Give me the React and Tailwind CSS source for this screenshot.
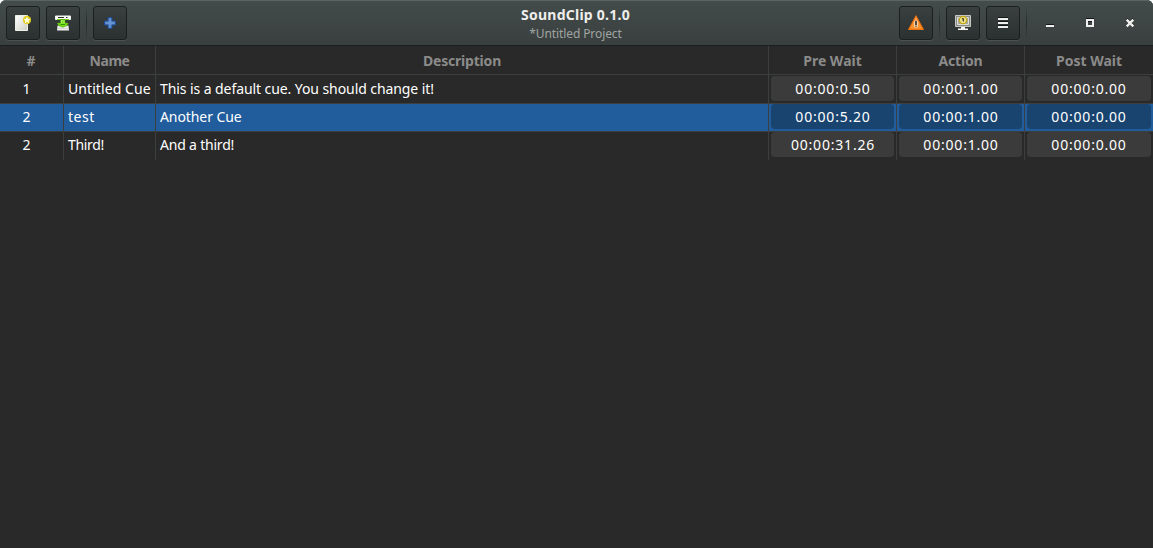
import React from "react";

function NewIcon() {
  return (
    <svg width="16" height="16" viewBox="0 0 16 16">
      <defs>
        <linearGradient id="page" x1="0" y1="0" x2="1" y2="1">
          <stop offset="0" stopColor="#ffffff" />
          <stop offset="1" stopColor="#cfcfc8" />
        </linearGradient>
      </defs>
      <path d="M0.5 0.5H12.5V15.5H0.5Z" fill="url(#page)" stroke="#f0f0ea" />
      <circle cx="12" cy="5" r="4.2" fill="#e4cd14" opacity="0.95" />
      <path d="M12 1.400l1 2.300 2.500.3-1.900 1.700.5 2.500L12 7 9.900 8.200l.5-2.500L8.500 4l2.500-.3z" fill="#fffde0" />
    </svg>
  );
}

function SaveIcon() {
  return (
    <svg width="16" height="16" viewBox="0 0 16 16">
      <path d="M0.500 1H15.500V4.500H0.500Z" fill="#fbfbf8" stroke="#f4f4ee" strokeWidth="1" />
      <path d="M3 2.500H9M11 2.500H12.500" stroke="#2b2f2d" />
      <path d="M2.500 10.500H13.500L14 15.500H2Z" fill="#eeeeec" />
      <path d="M3 13.500H13" stroke="#d4d4d0" />
      <path d="M2 4.500H14" stroke="#73d216" />
      <path d="M5.500 4.500H10V8H13.200L12 10.500 7.700 12.200 3.500 10.500 2.300 8H5.500Z" fill="#73e01a" stroke="#4e9a06" strokeWidth="0.600" />
      <path d="M5.500 9.500H10" stroke="#3f8f06" />
      <path d="M6.500 5V8.500M9 5V8.500" stroke="#b4f26c" fill="none" />
    </svg>
  );
}

function AddIcon() {
  return (
    <svg width="16" height="16" viewBox="0 0 16 16">
      <path d="M6 2.500H10V6H13.500V10H10V13.500H6V10H2.500V6H6Z" fill="#4f80c4" stroke="#234a90" strokeLinejoin="round" />
      <path d="M8 3.500V12.500M3.500 8H12.500" stroke="#6c98d4" strokeWidth="1.500" />
    </svg>
  );
}

function WarningIcon() {
  return (
    <svg width="16" height="16" viewBox="0 0 16 16">
      <defs>
        <linearGradient id="warn" x1="0" y1="0" x2="0" y2="1">
          <stop offset="0" stopColor="#f8b070" />
          <stop offset="1" stopColor="#f98a1c" />
        </linearGradient>
      </defs>
      <path d="M8 1L15.300 14.500H0.700Z" fill="url(#warn)" stroke="#ee7210" strokeWidth="1.200" strokeLinejoin="round" />
      <path d="M6 6H10V12.500H6Z" fill="#f7d9b8" opacity="0.850" />
      <path d="M8 6V10" stroke="#2e2a26" strokeWidth="1.600" />
      <path d="M8 10.500V12" stroke="#8a6a48" strokeWidth="1.600" />
    </svg>
  );
}

function DisplayIcon() {
  return (
    <svg width="16" height="16" viewBox="0 0 16 16">
      <path d="M0.500 0.500H15.500V11.500H0.500Z" fill="#8a8c88" stroke="#c8c8c4" />
      <path d="M2.500 2.500H13.500V9.500H2.500Z" fill="#a4a6a0" stroke="#e0e0dc" />
      <path d="M6 12H10V13.500H13V15H3V13.500H6Z" fill="#f4f4f2" />
      <circle cx="8" cy="5" r="3.700" fill="#ece28c" stroke="#c4a80e" strokeWidth="1.200" />
      <path d="M7 3.500H8.500M8.500 3.500V6.500M7 5H8.500" stroke="#3c3820" strokeWidth="0.900" fill="none" />
    </svg>
  );
}

function MenuIcon() {
  return (
    <svg width="16" height="16" viewBox="0 0 16 16" shapeRendering="crispEdges">
      <path d="M3 2H13V3H3ZM3 6H13V7H3ZM3 10H13V11H3Z" fill="#151818" />
      <path d="M3 3H13V5H3ZM3 7H13V9H3ZM3 11H13V13H3Z" fill="#eeeeec" />
    </svg>
  );
}

function ToolButton({ label, children }) {
  return (
    <button
      aria-label={label}
      className="flex h-[34px] w-[34px] shrink-0 items-center justify-center rounded-[3px] border border-[#1b1f1f] bg-linear-to-b from-[#3a403f] to-[#2b3030] shadow-[0_1px_0_#4a5251]"
    >
      {children}
    </button>
  );
}

function Separator() {
  return <div className="h-[34px] w-px shrink-0 bg-linear-to-b from-transparent via-[#242a2a] to-transparent" />;
}

function WindowButton({ label, children }) {
  return (
    <button aria-label={label} className="flex h-[34px] w-[40px] items-center justify-center">
      <svg width="16" height="16" viewBox="0 0 16 16">{children}</svg>
    </button>
  );
}

function HeaderBar() {
  return (
    <header className="grid h-[46px] grid-cols-[1fr_auto_1fr] rounded-t-[6px] border-t border-b border-t-[#5b6463] border-b-[#1a1f1f] bg-linear-to-b from-[#434c4b] to-[#393f3e] pt-[5px]">
      <div className="flex pl-[6px]">
        <ToolButton label="New"><NewIcon /></ToolButton>
        <div className="w-[6px]" />
        <ToolButton label="Save"><SaveIcon /></ToolButton>
        <div className="w-[6px]" />
        <Separator />
        <div className="w-[6px]" />
        <ToolButton label="Add cue"><AddIcon /></ToolButton>
      </div>
      <div className="flex flex-col items-center pr-[2px] whitespace-nowrap">
        <h1 className="h-[19px] text-[14px] leading-[18px] font-bold tracking-[0.250px] text-[#eeeeec]">SoundClip 0.1.0</h1>
        <p className="h-[17px] text-[12px] leading-[17px] tracking-[-0.100px] text-[#a0a4a2]">*Untitled Project</p>
      </div>
      <div className="flex justify-end pr-[3px]">
        <ToolButton label="Warnings"><WarningIcon /></ToolButton>
        <div className="w-[6px]" />
        <Separator />
        <div className="w-[6px]" />
        <ToolButton label="Display"><DisplayIcon /></ToolButton>
        <div className="w-[6px]" />
        <ToolButton label="Menu"><MenuIcon /></ToolButton>
        <div className="w-[6px]" />
        <Separator />
        <div className="w-[3px]" />
        <WindowButton label="Minimize">
          <path d="M4 9H12V10H4Z" fill="#151818" />
          <path d="M4 10H12V12H4Z" fill="#eeeeec" />
        </WindowButton>
        <WindowButton label="Maximize">
          <path d="M4 3H12V4H4ZM6 6H10V7H6Z" fill="#151818" />
          <path d="M5 5H11V11H5Z" fill="none" stroke="#eeeeec" strokeWidth="2" />
        </WindowButton>
        <WindowButton label="Close">
          <path d="M4.700 3.700L11.300 10.300M11.300 3.700L4.700 10.300" stroke="#151818" strokeWidth="2" />
          <path d="M4.700 4.700L11.300 11.300M11.300 4.700L4.700 11.300" stroke="#eeeeec" strokeWidth="2.400" />
        </WindowButton>
      </div>
    </header>
  );
}

const columns = [
  { label: "#", tracking: "tracking-normal pr-px" },
  { label: "Name", tracking: "tracking-[-0.500px]" },
  { label: "Description", tracking: "tracking-[-0.200px]" },
  { label: "Pre Wait", tracking: "tracking-normal" },
  { label: "Action", tracking: "tracking-[-0.200px]" },
  { label: "Post Wait", tracking: "tracking-normal" },
];

const cues = [
  { number: "1", name: "Untitled Cue", nameTracking: "tracking-[0.080px]", description: "This is a default cue. You should change it!", descriptionTracking: "tracking-[-0.080px]", times: ["00:00:0.50", "00:00:1.00", "00:00:0.00"] },
  { number: "2", name: "test", nameTracking: "tracking-[0.500px]", description: "Another Cue", descriptionTracking: "tracking-[-0.080px]", times: ["00:00:5.20", "00:00:1.00", "00:00:0.00"], selected: true },
  { number: "2", name: "Third!", nameTracking: "tracking-[-0.350px]", description: "And a third!", descriptionTracking: "tracking-[-0.200px]", times: ["00:00:31.26", "00:00:1.00", "00:00:0.00"] },
];

const rowGrid = "grid grid-cols-[64px_92px_613px_128px_128px_128px]";
const cellLine = "border-r border-[#3b403f] last:border-r-0";

function CueRow({ cue }) {
  return (
    <div className={`${rowGrid} h-[28px] border-b border-[#3b403f] text-[14px] leading-[26px] whitespace-nowrap text-white last:border-b-0 ${cue.selected ? "bg-[#215d9c]" : ""}`}>
      <div className={`${cellLine} pr-[10px] text-center`}>{cue.number}</div>
      <div className={`${cellLine} pl-[4px] ${cue.nameTracking}`}>{cue.name}</div>
      <div className={`${cellLine} pl-[4px] ${cue.descriptionTracking}`}>{cue.description}</div>
      {cue.times.map((time, i) => (
        <div key={i} className={`${cellLine} px-[2px]`}>
          <div className={`h-[25px] rounded-[4px] text-center leading-[26px] tracking-[0.800px] ${i === 2 ? "" : "pl-px"} ${cue.selected ? "bg-[#19446f]" : "bg-[#3b3b3b]"}`}>{time}</div>
        </div>
      ))}
    </div>
  );
}

export default function App() {
  return (
    <div className="h-[548px] w-[1153px] overflow-hidden bg-white font-['Noto_Sans','Open_Sans',sans-serif]">
      <div className="h-[548px] rounded-t-[6px] bg-[#292929]">
        <HeaderBar />
        <div className={`${rowGrid} h-[29px] border-b border-[#3b403f] text-center text-[14px] leading-[30px] font-bold text-[#8b8b8a]`}>
          {columns.map((column) => (
            <div key={column.label} className={`${cellLine} ${column.tracking}`}>{column.label}</div>
          ))}
        </div>
        <div className="pt-px">
          {cues.map((cue, i) => (
            <CueRow key={i} cue={cue} />
          ))}
        </div>
      </div>
    </div>
  );
}
